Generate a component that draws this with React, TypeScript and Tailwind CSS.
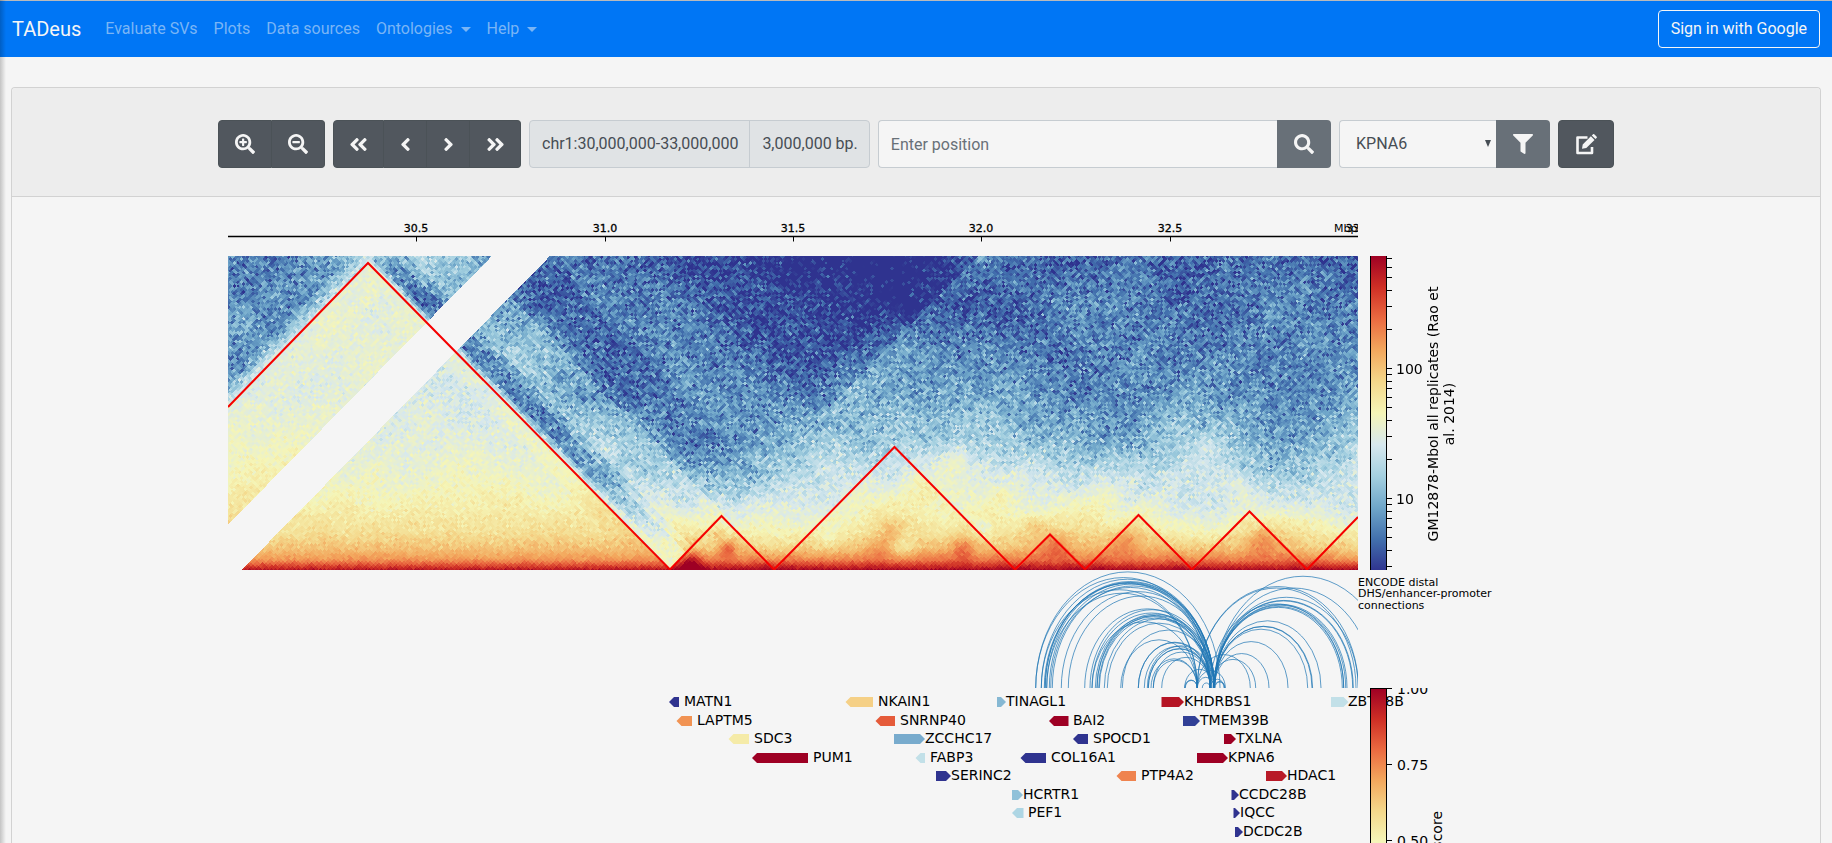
import { useEffect, useRef, type ReactNode } from "react";
import {
  FaAngleDoubleLeft,
  FaAngleDoubleRight,
  FaAngleLeft,
  FaAngleRight,
  FaEdit,
  FaFilter,
  FaSearch,
  FaSearchMinus,
  FaSearchPlus,
} from "react-icons/fa";

/* ---------- colour scale ---------- */

const STOPS: number[][] = [
  [47, 51, 143],
  [66, 112, 173],
  [111, 166, 201],
  [164, 208, 224],
  [215, 232, 238],
  [245, 245, 183],
  [244, 215, 138],
  [243, 167, 93],
  [234, 105, 64],
  [206, 46, 37],
  [158, 0, 36],
];

function tint(t: number): [number, number, number] {
  const v = Math.min(0.9999, Math.max(0, t)) * 10;
  const k = Math.floor(v);
  const f = v - k;
  const a = STOPS[k];
  const b = STOPS[k + 1];
  return [a[0] + (b[0] - a[0]) * f, a[1] + (b[1] - a[1]) * f, a[2] + (b[2] - a[2]) * f];
}

/* ---------- contact map ---------- */

const MAP_W = 1130;
const MAP_H = 314;
const SLOPE = 1.018;
const BIN = 3.77;

const ROWS = [0, 47, 94, 141, 188, 219, 249, 274, 292, 304, 314];
const LEVELS: number[][] = [
  [0.14, 0.17, 0.3, 0.24, 0.12, 0.12, 0.06, 0.0, -0.08, -0.06, 0.08, 0.08, 0.1, 0.08, 0.08, 0.08],
  [0.16, 0.17, 0.2, 0.14, 0.1, 0.17, 0.12, 0.05, 0.0, -0.05, 0.08, 0.15, 0.14, 0.11, 0.12, 0.12],
  [0.17, 0.17, 0.2, 0.2, 0.24, 0.12, 0.16, 0.08, 0.04, 0.12, 0.2, 0.1, 0.15, 0.13, 0.15, 0.14],
  [0.17, 0.2, 0.2, 0.2, 0.22, 0.12, 0.19, 0.15, 0.15, 0.22, 0.22, 0.18, 0.16, 0.19, 0.16, 0.2],
  [0.2, 0.2, 0.2, 0.2, 0.2, 0.3, 0.16, 0.2, 0.3, 0.32, 0.28, 0.28, 0.22, 0.36, 0.2, 0.36],
  [0.3, 0.3, 0.3, 0.3, 0.3, 0.24, 0.26, 0.28, 0.38, 0.41, 0.42, 0.36, 0.37, 0.4, 0.29, 0.39],
  [0.4, 0.4, 0.4, 0.4, 0.4, 0.4, 0.34, 0.4, 0.44, 0.49, 0.46, 0.44, 0.47, 0.41, 0.44, 0.38],
  [0.5, 0.5, 0.5, 0.5, 0.5, 0.5, 0.45, 0.49, 0.51, 0.55, 0.54, 0.56, 0.56, 0.5, 0.57, 0.48],
  [0.6, 0.6, 0.6, 0.6, 0.6, 0.6, 0.58, 0.6, 0.6, 0.65, 0.62, 0.66, 0.66, 0.62, 0.65, 0.58],
  [0.75, 0.75, 0.75, 0.75, 0.75, 0.75, 0.74, 0.75, 0.74, 0.76, 0.76, 0.76, 0.76, 0.75, 0.76, 0.72],
  [0.97, 0.97, 0.97, 0.97, 0.97, 0.97, 0.97, 0.97, 0.97, 0.97, 0.97, 0.97, 0.97, 0.97, 0.97, 0.97],
];

const INSIDE: [number, number][] = [
  [0, 0.96],
  [5, 0.84],
  [10, 0.73],
  [22, 0.64],
  [38, 0.57],
  [60, 0.525],
  [85, 0.48],
  [120, 0.44],
  [175, 0.4],
  [320, 0.425],
];

// x, y, radius, strength
const SPOTS: number[][] = [
  [499, 292, 9, 0.2],
  [463, 308, 10, 0.22],
  [488, 277, 8, 0.1],
  [735, 292, 12, 0.13],
  [827, 290, 14, 0.1],
  [900, 285, 14, 0.08],
  [1032, 285, 14, 0.12],
  [665, 276, 12, 0.08],
  [650, 292, 14, 0.06],
  [727, 205, 14, 0.08],
  [692, 235, 16, 0.05],
  [806, 270, 10, 0.08],
  [872, 242, 16, 0.05],
  [770, 240, 16, 0.05],
  [1010, 235, 18, 0.05],
  [675, 290, 12, -0.12],
  [755, 272, 10, -0.08],
  [600, 280, 12, -0.06],
];

// start and end of every called domain, in map pixels
const DOMAINS: [number, number][] = [
  [-162, 442],
  [442, 546],
  [546, 787],
  [787, 857],
  [857, 964],
  [964, 1079],
  [1079, 1185],
];

function hash(a: number, b: number): number {
  let h = (Math.imul(a, 374761393) + Math.imul(b, 668265263)) | 0;
  h = Math.imul(h ^ (h >>> 13), 1274126177);
  h ^= h >>> 16;
  return (h >>> 0) / 4294967296;
}

function streak(v: number, seed: number): number {
  const s = v / 26;
  const k = Math.floor(s);
  const f = s - k;
  const u = f * f * (3 - 2 * f);
  return (hash(k, seed) * (1 - u) + hash(k + 1, seed) * u - 0.5) * 2;
}

function gridLevel(x: number, y: number): number {
  const gx = Math.min(14.999, Math.max(0, (x / MAP_W) * 15));
  const cx = Math.floor(gx);
  const fx = gx - cx;
  let r = 0;
  while (r < ROWS.length - 2 && y > ROWS[r + 1]) r++;
  const fy = Math.min(1, Math.max(0, (y - ROWS[r]) / (ROWS[r + 1] - ROWS[r])));
  const top = LEVELS[r][cx] * (1 - fx) + LEVELS[r][cx + 1] * fx;
  const low = LEVELS[r + 1][cx] * (1 - fx) + LEVELS[r + 1][cx + 1] * fx;
  return top * (1 - fy) + low * fy;
}

function insideLevel(d: number): number {
  for (let k = 1; k < INSIDE.length; k++) {
    if (d <= INSIDE[k][0]) {
      const [d0, t0] = INSIDE[k - 1];
      const [d1, t1] = INSIDE[k];
      return t0 + ((t1 - t0) * (d - d0)) / (d1 - d0);
    }
  }
  return 0.43;
}

function contact(i: number, j: number): number {
  const x = (i + j) / 2;
  const d = (j - i) / 2;
  const y = MAP_H - d * SLOPE;
  const far = Math.min(1, d / 60);
  if (i > -162 && j < 442) {
    const warm = i < -44 ? 0.04 : 0;
    const rim = i > -44 && j > 420 ? 0.03 : 0;
    return insideLevel(d) + (warm + rim) * far + (streak(i, 3) + streak(j, 5)) * 0.012 * far;
  }
  let t = gridLevel(x, y);
  t += (streak(i, 11) + streak(j, 17)) * 0.022 * far;
  if (i < -162) {
    const e = Math.min(1, (-162 - i) / 26);
    return 0.4 * (1 - e) + t * e;
  }
  if (i < 442) {
    const e = j - 442;
    if (e < 9) t = 0.43 + (t - 0.43) * (e / 9);
    else if (e < 34) t -= 0.07;
    else if (e > 44 && e < 110) t += 0.07;
    else if (e > 125 && e < 185) t -= 0.04;
    if (e < 34) t = Math.min(t, 0.48);
  } else if (i < 480 && d > 150) {
    t += 0.1 * (1 - (i - 442) / 38);
  }
  for (const s of SPOTS) {
    const q = ((x - s[0]) ** 2 + (y - s[1]) ** 2) / (s[2] * s[2]);
    if (q < 5) t += s[3] * Math.exp(-q);
  }
  for (const [a, b] of DOMAINS) {
    if (i >= a && j <= b) {
      const edge = Math.min(i - a, b - j);
      t += edge < 16 ? 0.035 : 0.015;
    }
  }
  return t;
}

function ContactMap() {
  const ref = useRef<HTMLCanvasElement>(null);
  useEffect(() => {
    const ctx = ref.current?.getContext("2d");
    if (!ctx) return;
    const image = ctx.createImageData(MAP_W, MAP_H);
    const cache = new Map<number, [number, number, number]>();
    for (let y = 0; y < MAP_H; y++) {
      const d = (MAP_H - y - 0.5) / SLOPE;
      for (let x = 0; x < MAP_W; x++) {
        const left = x - d;
        const right = x + d;
        if ((left > -45 && left < 13) || (right > -45 && right < 13)) continue;
        const bi = Math.floor(left / BIN);
        const bj = Math.floor(right / BIN);
        const key = (bi + 500) * 2000 + bj;
        let c = cache.get(key);
        if (!c) {
          const t = contact((bi + 0.5) * BIN, (bj + 0.5) * BIN);
          const amp = t < 0.25 ? 0.058 : t < 0.45 ? 0.058 - (t - 0.25) * 0.17 : t < 0.65 ? 0.021 : 0.014;
          const g = hash(bi, bj) + hash(bj + 77, bi - 31) + hash(bi * 3 + 1, bj * 7) - 1.5;
          c = tint(t + g * amp * 2);
          cache.set(key, c);
        }
        const p = (y * MAP_W + x) * 4;
        image.data[p] = c[0];
        image.data[p + 1] = c[1];
        image.data[p + 2] = c[2];
        image.data[p + 3] = 255;
      }
    }
    ctx.putImageData(image, 0, 0);
  }, []);
  return <canvas ref={ref} width={MAP_W} height={MAP_H} className="block" aria-label="Contact map" />;
}

const TAD_LINE =
  "0,151 140,7 442,313.5 493.5,260 546,313.5 666.5,191 787,313.5 822,278.5 857,313.5 910.5,259 964,313.5 1021.5,255.5 1079,313.5 1130,261";

/* ---------- tracks ---------- */

function Gradient({ id }: { id: string }) {
  return (
    <defs>
      <linearGradient id={id} x1="0" y1="1" x2="0" y2="0">
        {STOPS.map((c, k) => (
          <stop key={k} offset={k / 10} stopColor={`rgb(${c[0]},${c[1]},${c[2]})`} />
        ))}
      </linearGradient>
    </defs>
  );
}

function Track({ children, side }: { children: ReactNode; side?: ReactNode }) {
  return (
    <div className="flex items-start">
      <div className="relative shrink-0">{children}</div>
      <div className="relative shrink-0">{side}</div>
    </div>
  );
}

const TICKS = [
  { x: 188, label: "30.5" },
  { x: 377, label: "31.0" },
  { x: 565, label: "31.5" },
  { x: 753, label: "32.0" },
  { x: 942, label: "32.5" },
  { x: 1130, label: "33.0" },
];

function Axis() {
  return (
    <svg width="1130" height="39" className="block text-[11px]">
      <path d="M0 19.5H1130" stroke="#000" strokeWidth="1.4" />
      {TICKS.map((t) => (
        <g key={t.label}>
          <path d={`M${t.x + 0.5} 19V24.5`} stroke="#000" />
          <text x={t.x} y="15" textAnchor="middle" stroke="#000" strokeWidth="0.3">
            {t.label}
          </text>
        </g>
      ))}
      <text x="1106" y="15">
        Mbp
      </text>
    </svg>
  );
}

const SCALE_TICKS = [
  2, 11, 21, 34, 50, 73, 112, 118, 125, 132, 141, 151, 164, 180, 203, 242, 248, 255, 262, 271, 281, 294, 310,
];

function MapScale() {
  return (
    <svg width="130" height="314" className="block text-[14px]">
      <Gradient id="map-scale" />
      <rect x="12.5" y="-1" width="16" height="316" fill="url(#map-scale)" stroke="#000" />
      {SCALE_TICKS.map((y) => (
        <path key={y} d={`M29 ${y + 0.5}h5`} stroke="#000" />
      ))}
      <text x="38" y="118">
        100
      </text>
      <text x="38" y="248">
        10
      </text>
      <g textAnchor="middle">
        <text transform="translate(80 158) rotate(-90)">GM12878-MboI all replicates (Rao et</text>
        <text transform="translate(96 158) rotate(-90)">al. 2014)</text>
      </g>
    </svg>
  );
}

// both feet of every link, in track pixels
const LINKS: [number, number][] = [
  [807.7, 992],
  [807.7, 983],
  [813.3, 986],
  [813.3, 969.3],
  [816.3, 982.3],
  [817, 984],
  [817.3, 986.3],
  [818.7, 986.3],
  [818.7, 969.3],
  [821.3, 986.3],
  [822.7, 982.3],
  [824.3, 986.3],
  [833.3, 986.3],
  [840.3, 986.3],
  [856.7, 982.3],
  [862, 986.3],
  [864, 969.3],
  [864, 983],
  [867.3, 982.3],
  [869, 986.3],
  [869, 982.3],
  [870.7, 986.3],
  [871.3, 982.3],
  [876.3, 986.3],
  [879.3, 982.3],
  [892.7, 969.3],
  [894.3, 986.3],
  [910.3, 982.3],
  [910.3, 983],
  [916.3, 982.3],
  [919.3, 986.3],
  [920.3, 982.3],
  [920.3, 982.8],
  [923, 969.3],
  [925.3, 982.3],
  [925.3, 969.3],
  [933.7, 982.3],
  [956.7, 986.3],
  [956.7, 969.3],
  [957.3, 969.3],
  [969.3, 997.3],
  [969.3, 986.3],
  [974.3, 982.3],
  [982.3, 996.3],
  [986.3, 996.3],
  [987, 997],
  [969.3, 1022.3],
  [969.3, 1128],
  [969.3, 1130.3],
  [982.3, 1027.7],
  [986.3, 1041],
  [986.3, 1060],
  [986.3, 1079.7],
  [986.3, 1084],
  [986.6, 1084.6],
  [986.3, 1093],
  [986.3, 1114.3],
  [986.3, 1115.7],
  [982.3, 1115.7],
  [986.3, 1117.7],
  [986.3, 1119],
  [986.3, 1124.7],
  [986.3, 1125.3],
  [986.3, 1130.3],
  [986.3, 1145],
  [986.3, 1163.7],
];

function Links() {
  return (
    <svg width="1130" height="118" className="block">
      <g fill="none" stroke="#1f77b4" strokeOpacity="0.75" strokeWidth="0.95">
        {LINKS.map(([a, b], k) => {
          const r = (b - a) / 2;
          return <path key={k} d={`M${a} 118A${r} ${r * 1.26} 0 0 1 ${b} 118`} />;
        })}
      </g>
    </svg>
  );
}

function LinksLabel() {
  return (
    <svg width="200" height="118" className="block text-[11px]">
      <text x="0" y="16">
        ENCODE distal
      </text>
      <text x="0" y="27">
        DHS/enhancer-promoter
      </text>
      <text x="0" y="39">
        connections
      </text>
    </svg>
  );
}

type Gene = { name: string; row: number; from: number; to: number; dir: "l" | "r"; fill: string };

const GENES: Gene[] = [
  { name: "MATN1", row: 0, from: 441, to: 451, dir: "l", fill: "#2f338f" },
  { name: "NKAIN1", row: 0, from: 617.5, to: 645, dir: "l", fill: "#f5d086" },
  { name: "TINAGL1", row: 0, from: 769, to: 778, dir: "r", fill: "#86b8d3" },
  { name: "KHDRBS1", row: 0, from: 933.5, to: 956, dir: "r", fill: "#b51424" },
  { name: "ZBTB8B", row: 0, from: 1103, to: 1120.5, dir: "r", fill: "#c2e0e8" },
  { name: "LAPTM5", row: 1, from: 448.5, to: 464, dir: "l", fill: "#f19353" },
  { name: "SNRNP40", row: 1, from: 647.5, to: 667, dir: "l", fill: "#e55b3a" },
  { name: "BAI2", row: 1, from: 821, to: 840.5, dir: "l", fill: "#9e0024" },
  { name: "TMEM39B", row: 1, from: 955, to: 972, dir: "r", fill: "#314096" },
  { name: "SDC3", row: 2, from: 500.5, to: 521, dir: "l", fill: "#f5eba8" },
  { name: "ZCCHC17", row: 2, from: 666, to: 697, dir: "r", fill: "#78abcd" },
  { name: "SPOCD1", row: 2, from: 845, to: 860, dir: "l", fill: "#2f338f" },
  { name: "TXLNA", row: 2, from: 996, to: 1008, dir: "r", fill: "#9e0024" },
  { name: "PUM1", row: 3, from: 524, to: 580, dir: "l", fill: "#9e0024" },
  { name: "FABP3", row: 3, from: 687.5, to: 697, dir: "l", fill: "#c2e0e8" },
  { name: "COL16A1", row: 3, from: 792.5, to: 818, dir: "l", fill: "#2f338f" },
  { name: "KPNA6", row: 3, from: 969, to: 1000, dir: "r", fill: "#9e0024" },
  { name: "SERINC2", row: 4, from: 708, to: 723, dir: "r", fill: "#2f338f" },
  { name: "PTP4A2", row: 4, from: 888.5, to: 908, dir: "l", fill: "#ef834e" },
  { name: "HDAC1", row: 4, from: 1038, to: 1059, dir: "r", fill: "#b81a27" },
  { name: "HCRTR1", row: 5, from: 784, to: 795, dir: "r", fill: "#90c1d9" },
  { name: "CCDC28B", row: 5, from: 1003.5, to: 1011, dir: "r", fill: "#2f338f" },
  { name: "PEF1", row: 6, from: 784, to: 795.5, dir: "l", fill: "#aed6e4" },
  { name: "IQCC", row: 6, from: 1005.5, to: 1012, dir: "r", fill: "#2f338f" },
  { name: "DCDC2B", row: 7, from: 1007, to: 1015, dir: "r", fill: "#2f338f" },
];

function Genes() {
  return (
    <svg width="1130" height="305" className="block overflow-visible text-[14px]">
      {GENES.map((g) => {
        const mid = 14 + Math.round(g.row * 18.5);
        const tip = Math.min(5, g.to - g.from);
        const d =
          g.dir === "l"
            ? `M${g.from} ${mid}l${tip} -5H${g.to}v10H${g.from + tip}z`
            : `M${g.to} ${mid}l${-tip} -5H${g.from}v10H${g.to - tip}z`;
        return (
          <g key={g.name}>
            <path d={d} fill={g.fill} />
            <text x={Math.floor(g.to) + (g.dir === "l" ? 5 : 0)} y={mid + 4}>
              {g.name}
            </text>
          </g>
        );
      })}
    </svg>
  );
}

function GeneScale() {
  return (
    <svg width="130" height="305" className="block text-[14px]">
      <Gradient id="gene-scale" />
      <rect x="12.5" y="0.5" width="16" height="305" fill="url(#gene-scale)" stroke="#000" />
      {["1.00", "0.75", "0.50", "0.25"].map((label, k) => (
        <g key={label}>
          <path d={`M29 ${Math.round(k * 76.2) + 0.5}h5`} stroke="#000" />
          <text x="39" y={Math.round(k * 76.2) + 6}>
            {label}
          </text>
        </g>
      ))}
      <text transform="translate(84 123) rotate(-90)" textAnchor="end">
        score
      </text>
    </svg>
  );
}

/* ---------- page ---------- */

function NavLink({ label, menu }: { label: string; menu?: boolean }) {
  return (
    <a href="#" className="flex items-center px-2 py-2 text-[#7ab5f5]">
      {label}
      {menu && (
        <span className="ml-2 border-x-[5px] border-t-[5px] border-x-transparent border-t-[#7ab5f5]" />
      )}
    </a>
  );
}

function ToolButton({ label, className, children }: { label: string; className: string; children: ReactNode }) {
  return (
    <button
      type="button"
      aria-label={label}
      className={`flex h-12 shrink-0 items-center justify-center text-[20px] text-[#f5f5f5] ${className}`}
    >
      {children}
    </button>
  );
}

export default function App() {
  return (
    <div className="relative flex h-screen flex-col overflow-hidden bg-[#f5f5f5] font-[Roboto,sans-serif] text-base text-black">
      <div className="pointer-events-none absolute inset-y-0 left-0 z-10 w-1.5 bg-linear-to-r from-black/20 to-transparent" />
      <nav className="flex h-[57px] shrink-0 items-center border-t border-[#b9babc] bg-[#0076f5] px-3">
        <a href="#" className="mr-4 text-xl text-[#f5f5f5]">
          TADeus
        </a>
        <div className="flex flex-1 items-center">
          <NavLink label="Evaluate SVs" />
          <NavLink label="Plots" />
          <NavLink label="Data sources" />
          <NavLink label="Ontologies" menu />
          <NavLink label="Help" menu />
        </div>
        <button type="button" className="h-[38px] rounded border border-[#f5f5f5] px-3 text-[#f5f5f5]">
          Sign in with Google
        </button>
      </nav>

      <main className="mx-[11px] mt-[30px] flex-1 rounded-t border border-b-0 border-[#d2d2d2]">
        <div className="rounded-t border-b border-[#d2d2d2] bg-[#ededed] pt-8 pb-7">
          <div className="mx-auto flex max-w-[1396px] gap-2">
            <div className="flex">
              <ToolButton label="Zoom in" className="w-[54px] rounded-l border border-[#4b5257] bg-[#51575e]">
                <FaSearchPlus />
              </ToolButton>
              <ToolButton label="Zoom out" className="w-[53px] rounded-r border border-l-0 border-[#4b5257] bg-[#51575e]">
                <FaSearchMinus />
              </ToolButton>
            </div>
            <div className="flex">
              <ToolButton label="Far left" className="w-[51px] rounded-l border border-[#4b5257] bg-[#51575e]">
                <FaAngleDoubleLeft size={21} />
              </ToolButton>
              <ToolButton label="Left" className="w-[43px] border-y border-r border-[#4b5257] bg-[#51575e]">
                <FaAngleLeft size={21} />
              </ToolButton>
              <ToolButton label="Right" className="w-[43px] border-y border-r border-[#4b5257] bg-[#51575e]">
                <FaAngleRight size={21} />
              </ToolButton>
              <ToolButton label="Far right" className="w-[51px] rounded-r border border-l-0 border-[#4b5257] bg-[#51575e]">
                <FaAngleDoubleRight size={21} />
              </ToolButton>
            </div>
            <div className="flex h-12 shrink-0 items-center overflow-hidden rounded border border-[#c6ccd1] bg-[#e0e3e5] whitespace-nowrap text-[#464d54]">
              <span className="pr-[11px] pl-3">chr1:30,000,000-33,000,000</span>
              <span className="flex h-full items-center border-l border-[#c6ccd1] pr-[11px] pl-3">3,000,000 bp.</span>
            </div>
            <form className="flex min-w-0 flex-1" onSubmit={(e) => e.preventDefault()}>
              <input
                type="text"
                aria-label="Position"
                placeholder="Enter position"
                className="h-12 min-w-0 flex-1 rounded-l border border-r-0 border-[#c6ccd1] bg-[#f5f5f5] px-3 outline-none placeholder:text-[#687078]"
              />
              <ToolButton label="Search" className="w-[54px] rounded-r bg-[#687078]">
                <FaSearch />
              </ToolButton>
            </form>
            <div className="flex">
              <div className="relative w-[157px]">
                <select
                  aria-label="Gene"
                  defaultValue="KPNA6"
                  className="h-12 w-full appearance-none rounded-l border border-r-0 border-[#c6ccd1] bg-[#f5f5f5] px-4 text-[#464d54] outline-none"
                >
                  <option>KPNA6</option>
                </select>
                <span className="pointer-events-none absolute top-5 right-[5px] border-x-[3px] border-t-[7px] border-x-transparent border-t-[#464d54]" />
              </div>
              <ToolButton label="Filter" className="w-[54px] rounded-r bg-[#687078]">
                <FaFilter />
              </ToolButton>
            </div>
            <ToolButton label="Edit" className="w-14 rounded border border-[#4b5257] bg-[#51575e]">
              <svg width="23" height="21" viewBox="0 0 23 21" fill="none" aria-hidden="true">
                <path d="M12.5 3.5H2.5v15.5h14.5v-6" stroke="currentColor" strokeWidth="2.6" strokeLinejoin="round" />
                <path
                  d="M7 14.8l.7-4.3 8.2-8.2 3.6 3.6-8.2 8.2zM16.8 1.4l1-1a1.2 1.2 0 0 1 1.7 0l2 2a1.2 1.2 0 0 1 0 1.700l-1 1z"
                  fill="currentColor"
                />
              </svg>
            </ToolButton>
          </div>
        </div>

        <div className="mx-auto max-w-[1396px] px-2.5 pt-5 font-['DejaVu_Sans',sans-serif]">
          <Track>
            <Axis />
          </Track>
          <Track side={<MapScale />}>
            <ContactMap />
            <svg width="1130" height="314" className="absolute inset-0">
              <polyline points={TAD_LINE} fill="none" stroke="#f50000" strokeWidth="2" />
            </svg>
          </Track>
          <Track side={<LinksLabel />}>
            <Links />
          </Track>
          <Track side={<GeneScale />}>
            <Genes />
          </Track>
        </div>
      </main>
    </div>
  );
}
